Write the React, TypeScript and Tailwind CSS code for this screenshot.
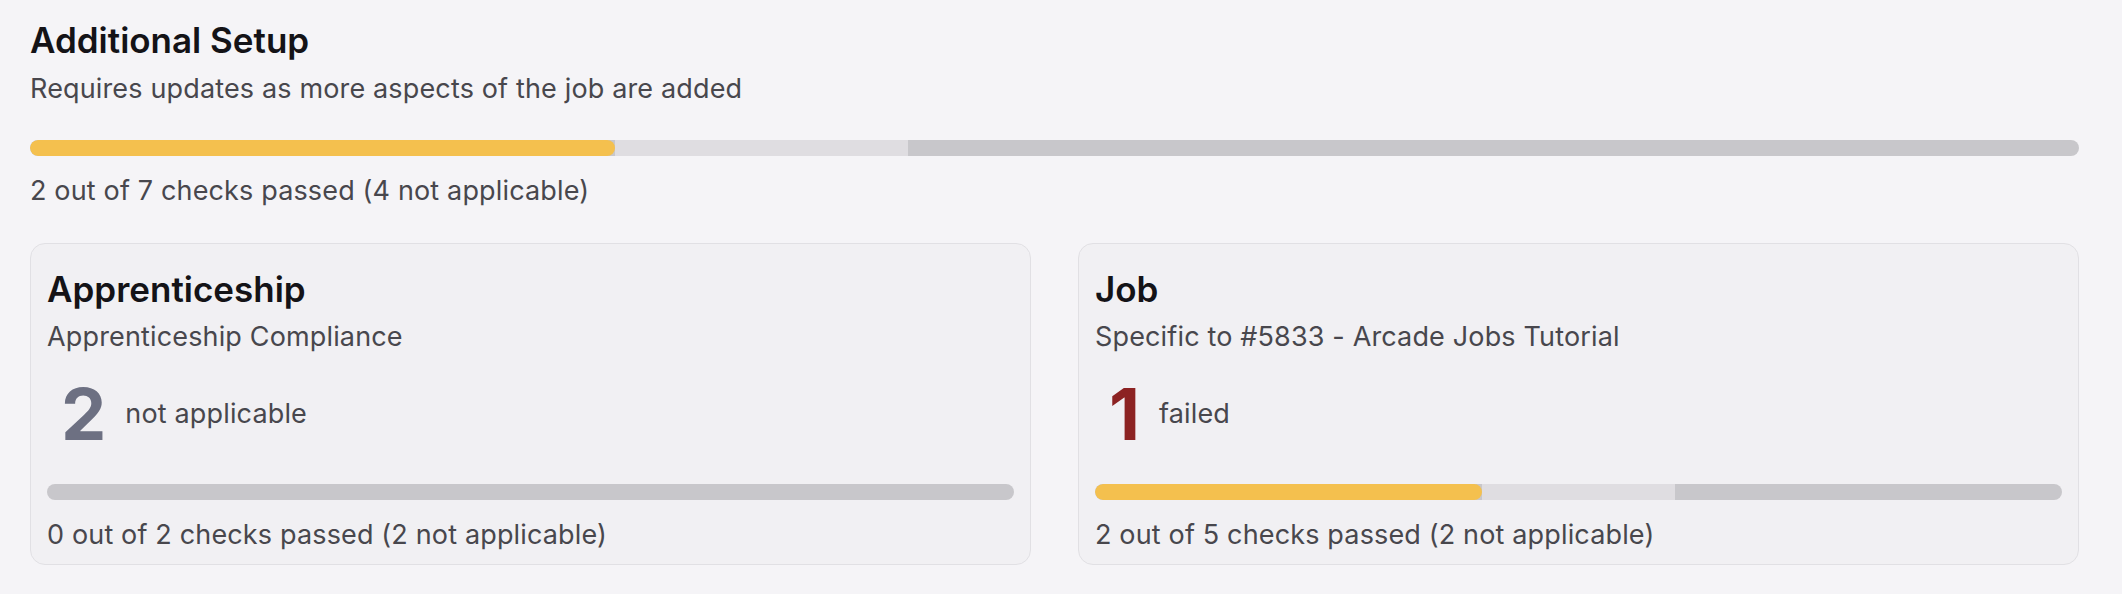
import React from "react";

type BarProps = { passed: number; failed: number; total: number };

function ProgressBar({ passed, failed, total }: BarProps) {
  return (
    <div className="flex h-[16px] w-full overflow-hidden rounded-full bg-[#c8c7cb]">
      {passed > 0 && (
        <div
          className="h-full rounded-full bg-[#f4c04e]"
          style={{ width: `${(passed / total) * 100}%` }}
        />
      )}
      {failed > 0 && (
        <div
          className="h-full bg-[#dfdde1]"
          style={{ width: `${(failed / total) * 100}%` }}
        />
      )}
    </div>
  );
}

type CardProps = {
  title: string;
  subtitle: string;
  count: number;
  countLabel: string;
  countColor: string;
  passed: number;
  failed: number;
  total: number;
  na: number;
};

function Card({ title, subtitle, count, countLabel, countColor, passed, failed, total, na }: CardProps) {
  return (
    <div className="rounded-[15px] border border-[#e1e0e4] bg-[#f1f0f3] px-[16px] pt-[25px] pb-[11px]">
      <div className="text-[35px] leading-[40px] font-semibold text-[#141317]">{title}</div>
      <div className="mt-[10px] text-[27px] leading-[36px] tracking-[0.15px] text-[#48474d]">{subtitle}</div>
      <div className="mt-[23px] flex items-center pl-[14px]">
        <span className={`text-[72px] leading-none font-bold ${countColor}`}>{count}</span>
        <span className="ml-[19px] text-[27px] leading-[36px] tracking-[0.15px] text-[#48474d]">{countLabel}</span>
      </div>
      <div className="mt-[34px]">
        <ProgressBar passed={passed} failed={failed} total={total} />
      </div>
      <div className="mt-[17px] text-[27px] leading-[36px] tracking-[0.15px] text-[#48474d]">
        {passed} out of {total} checks passed ({na} not applicable)
      </div>
    </div>
  );
}

export default function App() {
  return (
    <div
      className="min-h-[594px] w-full bg-[#f5f4f7] pl-[30px] pr-[43px] pt-[20px]"
      style={{ fontFamily: "Inter, 'Noto Sans', sans-serif" }}
    >
      <div className="text-[35px] leading-[40px] font-semibold text-[#141317]">Additional Setup</div>
      <div className="mt-[11px] text-[27px] leading-[36px] tracking-[0.15px] text-[#48474d]">
        Requires updates as more aspects of the job are added
      </div>
      <div className="mt-[33px]">
        <ProgressBar passed={2} failed={1} total={7} />
      </div>
      <div className="mt-[17px] text-[27px] leading-[36px] tracking-[0.15px] text-[#48474d]">
        2 out of 7 checks passed (4 not applicable)
      </div>
      <div className="mt-[34px] grid grid-cols-2 gap-[47px]">
        <Card
          title="Apprenticeship"
          subtitle="Apprenticeship Compliance"
          count={2}
          countLabel="not applicable"
          countColor="text-[#6d7082]"
          passed={0}
          failed={0}
          total={2}
          na={2}
        />
        <Card
          title="Job"
          subtitle="Specific to #5833 - Arcade Jobs Tutorial"
          count={1}
          countLabel="failed"
          countColor="text-[#8c2222]"
          passed={2}
          failed={1}
          total={5}
          na={2}
        />
      </div>
    </div>
  );
}
